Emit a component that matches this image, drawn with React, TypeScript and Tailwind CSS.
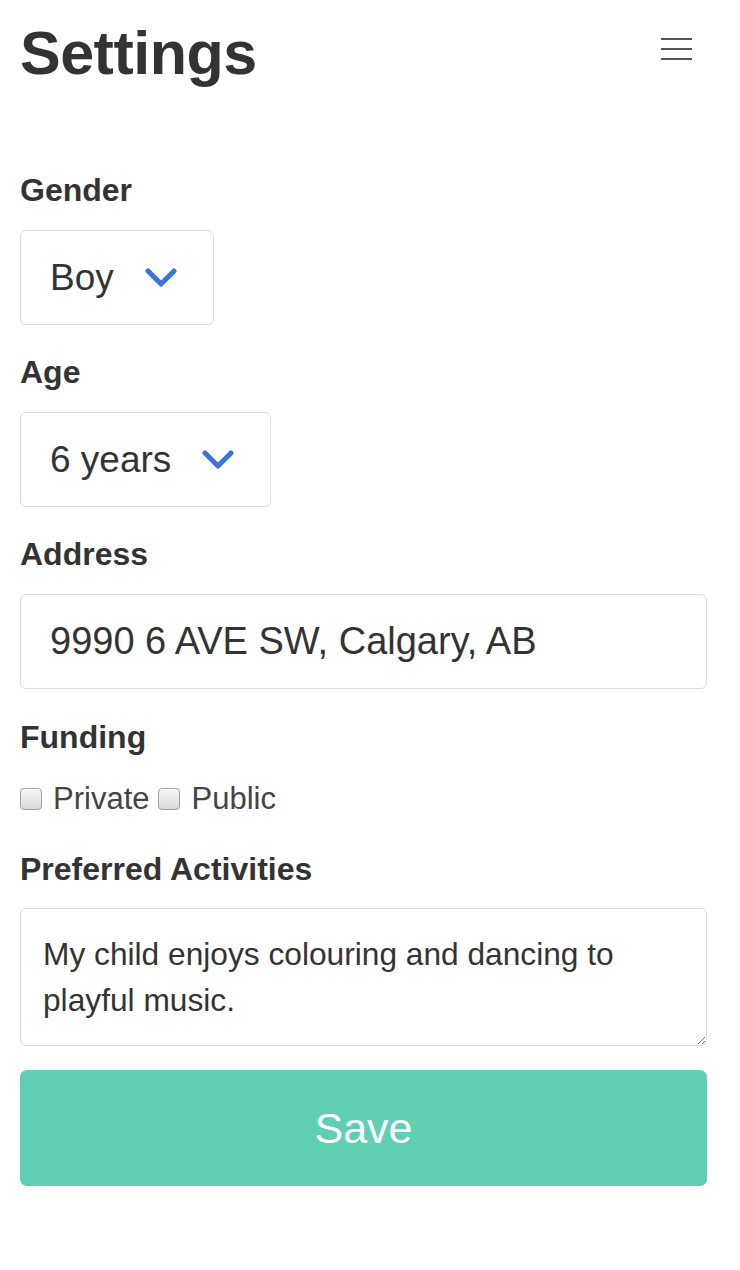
import { useState } from 'react';

function Chevron() {
  return (
    <svg className="h-[20px] w-[32px] shrink-0" viewBox="0 0 32 20" fill="none">
      <path d="M3 3 L16 16 L29 3" stroke="#3b73d9" strokeWidth="5" strokeLinecap="round" strokeLinejoin="round" />
    </svg>
  );
}

function FieldLabel({ children, className = '' }: { children: React.ReactNode; className?: string }) {
  return <label className={`block text-[32px] font-bold leading-[31px] ${className}`}>{children}</label>;
}

function SelectBox({ value }: { value: string }) {
  return (
    <button
      type="button"
      className="mt-[24px] flex h-[95px] items-center gap-[31px] rounded-[6px] border-[1.5px] border-[#dcdcdc] bg-white pl-[29px] pr-[36px] text-[37px] text-[#333]"
    >
      <span>{value}</span>
      <Chevron />
    </button>
  );
}

function Checkbox({ label }: { label: string }) {
  const [checked, setChecked] = useState(false);
  return (
    <label className="flex cursor-pointer items-center gap-[11px]" onClick={() => setChecked(!checked)}>
      <span className="h-[22px] w-[22px] rounded-[4px] border border-[#a0a0a0] bg-gradient-to-b from-[#f6f6f6] to-[#d9d9d9] shadow-[inset_0_1px_1px_rgba(255,255,255,0.8)]" />
      <span className="text-[31px] leading-[36px] text-[#444]">{label}</span>
    </label>
  );
}

export default function App() {
  return (
    <div className="min-h-screen bg-white pl-[20px] pr-[33px] font-['Liberation_Sans',Arial,sans-serif] text-[#333]">
      <header className="flex items-start justify-between pt-[23px]">
        <h1 className="text-[61px] font-bold leading-[61px] tracking-[-0.5px]">Settings</h1>
        <button type="button" className="mr-[15px] mt-[15px] flex w-[31px] flex-col gap-[8px]">
          <span className="h-[2px] w-full bg-[#555]" />
          <span className="h-[2px] w-full bg-[#555]" />
          <span className="h-[2px] w-full bg-[#555]" />
        </button>
      </header>

      <form className="mt-[91px] flex flex-col" onSubmit={(e) => e.preventDefault()}>
        <FieldLabel>Gender</FieldLabel>
        <div>
          <SelectBox value="Boy" />
        </div>

        <FieldLabel className="mt-[32px]">Age</FieldLabel>
        <div>
          <SelectBox value="6 years" />
        </div>

        <FieldLabel className="mt-[32px]">Address</FieldLabel>
        <input
          defaultValue="9990 6 AVE SW, Calgary, AB"
          className="mt-[24px] h-[95px] w-full rounded-[6px] border-[1.5px] border-[#dcdcdc] bg-white pl-[29px] text-[38px] text-[#333] outline-none"
        />

        <FieldLabel className="mt-[33px]">Funding</FieldLabel>
        <div className="mt-[28px] flex items-center gap-[9px]">
          <Checkbox label="Private" />
          <Checkbox label="Public" />
        </div>

        <FieldLabel className="mt-[37px]">Preferred Activities</FieldLabel>
        <textarea
          defaultValue="My child enjoys colouring and dancing to playful music."
          className="mt-[23px] h-[138px] w-full rounded-[6px] border-[1.5px] border-[#dcdcdc] bg-white px-[22px] pt-[22px] text-[31.7px] leading-[46px] text-[#333] outline-none"
        />

        <button
          type="submit"
          className="mt-[24px] h-[116px] w-full rounded-[7px] bg-[#5ecfb2] text-[43px] text-white"
        >
          Save
        </button>
      </form>
    </div>
  );
}
